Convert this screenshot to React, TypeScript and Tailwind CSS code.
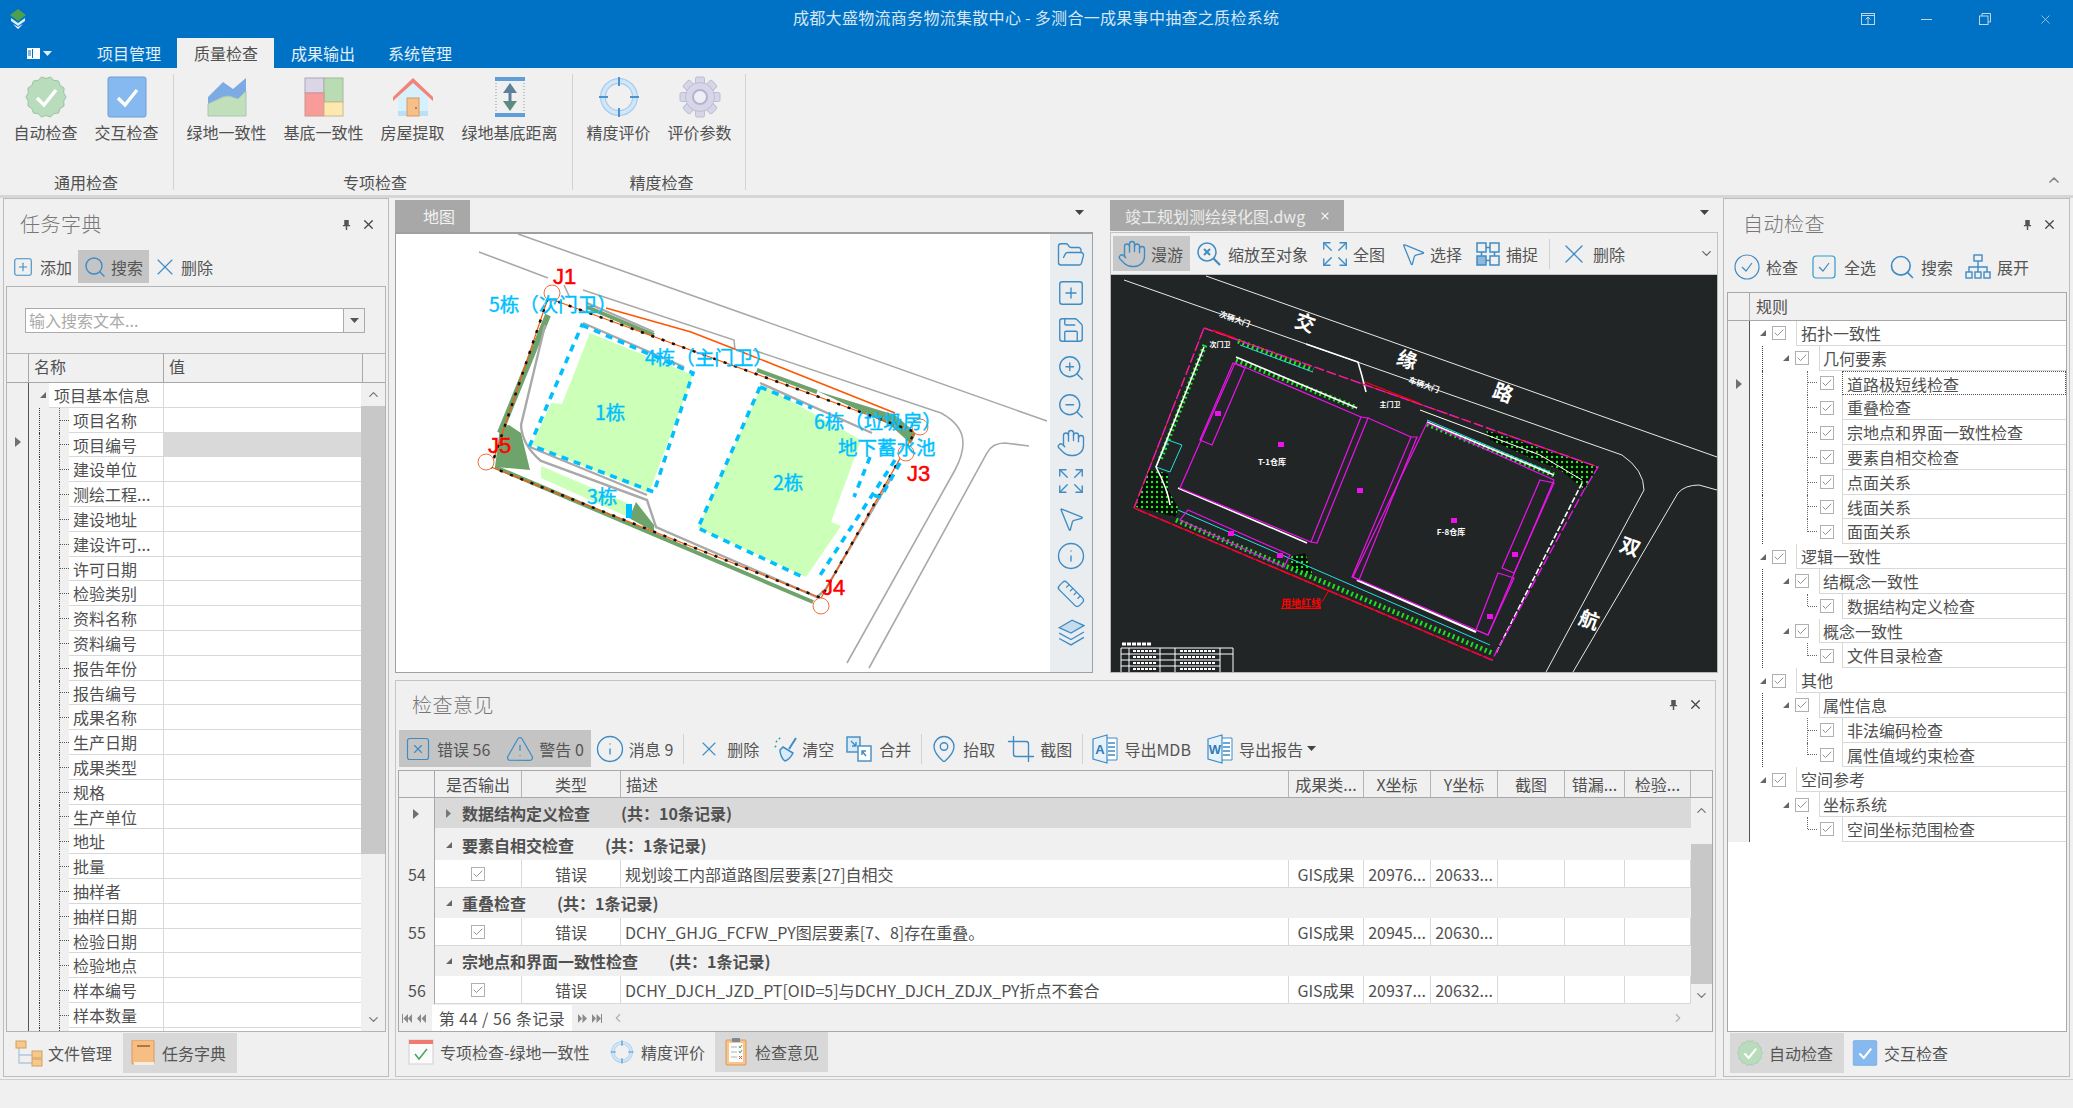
import React from "react";
import {
  Check,
  ChevronDown,
  ChevronLeft,
  ChevronRight,
  ChevronUp,
  Crop,
  Expand,
  FolderOpen,
  Hand,
  Info,
  MapPin,
  MousePointer2,
  Ruler,
  Save,
  Search,
  SquarePlus,
  SquareX,
  TriangleAlert,
  X,
  ZoomIn,
  ZoomOut,
} from "lucide-react";

const blue = "#3f8cc4";

const TreeCheck = () => (
  <span className="flex w-[14px] h-[14px] shrink-0 items-center justify-center border border-[#b0b0b0] bg-white">
    <Check size={12} color="#777777" strokeWidth={1.6} />
  </span>
);

const Triangle = ({ className = "" }: { className?: string }) => (
  <svg width="8" height="8" viewBox="0 0 8 8" className={className}>
    <path d="M7 1 V7 H1 Z" fill="#666666" />
  </svg>
);

const RowArrow = () => (
  <svg width="6" height="10" viewBox="0 0 6 10">
    <path d="M0 0 L6 5 L0 10 Z" fill="#707070" />
  </svg>
);

const DownCaret = ({ color = "#444444" }: { color?: string }) => (
  <svg width="9" height="5" viewBox="0 0 9 5">
    <path d="M0 0 H9 L4.5 5 Z" fill={color} />
  </svg>
);

const PinIcon = () => (
  <svg width="9" height="11" viewBox="0 0 10 12">
    <path d="M2.5 1 H7.5 V6.5 H9 V8 H5.8 V12 H4.2 V8 H1 V6.5 H2.5 Z" fill="#555555" />
  </svg>
);

const NavArrows = ({ dir }: { dir: "first" | "last" }) => (
  <svg width="28" height="9" viewBox="0 0 28 9" fill="#8a8a8a">
    {dir === "first" ? (
      <path d="M0 0 H1 V9 H0 Z M6 0 V9 L1.5 4.5 Z M10 0 V9 L6 4.5 Z M19 0 V9 L15 4.5 Z M24 0 V9 L19.5 4.5 Z" />
    ) : (
      <path d="M4 0 V9 L8 4.5 Z M8.5 0 V9 L13 4.5 Z M18 0 V9 L22 4.5 Z M22.5 0 V9 L27 4.5 Z M27 0 H28 V9 H27 Z" />
    )}
  </svg>
);

const BadgeIcon = ({ size = 42 }: { size?: number }) => {
  const pts = Array.from({ length: 28 }, (_, i) => {
    const r = i % 2 === 0 ? 20.5 : 18.5;
    const a = (i / 28) * Math.PI * 2;
    return `${21 + Math.cos(a) * r * 0.98},${21 + Math.sin(a) * r}`;
  }).join(" ");
  return (
    <svg width={size} height={size} viewBox="0 0 42 42">
      <polygon points={pts} fill="#b9dcbc" stroke="#98c4a4" />
      <path d="M12 22 L19 29 L31 14" fill="none" stroke="#ffffff" strokeWidth="3.4" />
    </svg>
  );
};

const BlueCheckIcon = ({ size = 42 }: { size?: number }) => (
  <svg width={size} height={size} viewBox="0 0 42 42">
    <rect x="2" y="1" width="38" height="40" rx="2" fill="#86b9ef" stroke="#6f9fd6" />
    <path d="M12 22 L19 29 L31 14" fill="none" stroke="#ffffff" strokeWidth="3.4" />
  </svg>
);

const GreenAreaIcon = () => (
  <svg width="42" height="42" viewBox="0 0 42 42">
    <path d="M2 21 L17 6 L27 13 L40 2 V16 L32 23 L23 20 L17 21 L2 28 Z" fill="#7cabe4" />
    <path d="M2 28 L17 21 L23 20 L32 23 L40 15 V40 H2 Z" fill="#c0dfbb" stroke="#adc4b4" />
  </svg>
);

const BlocksIcon = () => (
  <svg width="42" height="42" viewBox="0 0 42 42">
    <rect x="2" y="2" width="19" height="15" fill="#dcd5e8" stroke="#a8a8b4" />
    <rect x="21" y="2" width="19" height="24" fill="#b9dcb2" stroke="#a0b8a0" />
    <rect x="2" y="17" width="19" height="23" fill="#f99b98" stroke="#c89890" />
    <rect x="21" y="26" width="19" height="14" fill="#fde9ae" stroke="#c8b890" />
  </svg>
);

const HouseIcon = () => (
  <svg width="42" height="42" viewBox="0 0 42 42">
    <path d="M6 19 L21 6 L36 19 V40 H6 Z" fill="#d6f1fc" />
    <rect x="6" y="35" width="30" height="5" fill="#b8e2f4" />
    <path d="M1 21 L21 2 L41 21 V25 L21 7 L1 25 Z" fill="#f2837a" />
    <rect x="15" y="22" width="12" height="18" fill="#f7c088" stroke="#d49a66" />
    <circle cx="24" cy="32" r="0.9" fill="#996633" />
  </svg>
);

const DistanceIcon = () => (
  <svg width="42" height="42" viewBox="0 0 42 42">
    <rect x="7" y="2" width="28" height="38" fill="none" stroke="#8a9aa8" strokeDasharray="1 2" />
    <rect x="6" y="1" width="30" height="4" fill="#5f9ed8" />
    <rect x="6" y="37" width="30" height="4" fill="#5f9ed8" />
    <path d="M21 7 L28 17 H14 Z" fill="#5e7f98" />
    <path d="M21 35 L28 25 H14 Z" fill="#5c8c80" />
    <rect x="19.5" y="16" width="3" height="10" fill="#5e7f98" />
  </svg>
);

const RingIcon = ({ size = 42 }: { size?: number }) => (
  <svg width={size} height={size} viewBox="0 0 42 42">
    <circle cx="21" cy="21" r="16" fill="none" stroke="#a5cdee" strokeWidth="6" />
    <circle cx="21" cy="21" r="16" fill="none" stroke="#d2e6f8" strokeWidth="3.6" />
    <path d="M21 1 V10 M21 32 V41 M1 21 H10 M32 21 H41" stroke="#4d93d4" strokeWidth="2" />
  </svg>
);

const GearIcon = () => (
  <svg width="42" height="42" viewBox="0 0 42 42">
    {[0, 45, 90, 135, 180, 225, 270, 315].map((r) => (
      <rect key={r} x="16.5" y="1" width="9" height="9" rx="1.5" fill="#d6d6e8" stroke="#bcbcd2" transform={`rotate(${r} 21 21)`} />
    ))}
    <circle cx="21" cy="21" r="14.5" fill="#d6d6e8" stroke="#bcbcd2" />
    <circle cx="21" cy="21" r="7" fill="#eeeef6" stroke="#b4b4cc" strokeWidth="2" />
  </svg>
);

const ZoomObjectIcon = () => (
  <svg width="26" height="26" viewBox="0 0 26 26" fill="none" stroke={blue} strokeWidth="1.5">
    <circle cx="11" cy="11" r="9" />
    <path d="M17.5 17.5 L24 24" strokeWidth="2.2" />
    <path d="M8 8 L14 14 M14 8 L8 14" strokeWidth="2" />
  </svg>
);

const SnapIcon = () => (
  <svg width="26" height="26" viewBox="0 0 26 26" fill="none" stroke={blue} strokeWidth="1.5">
    <rect x="2" y="2" width="9" height="9" />
    <rect x="15" y="2" width="9" height="9" />
    <rect x="2" y="15" width="9" height="9" fill="#8fb8dc" />
    <rect x="15" y="15" width="9" height="9" />
    <path d="M11 6.5 H15 M6.5 11 V15 M15 19.5 H11 M19.5 11 V15" />
  </svg>
);

const TreeIcon = () => (
  <svg width="26" height="26" viewBox="0 0 26 26" fill="none" stroke={blue} strokeWidth="1.4">
    <rect x="9" y="1" width="8" height="6" />
    <rect x="1" y="18" width="6" height="6" />
    <rect x="10" y="18" width="6" height="6" />
    <rect x="19" y="18" width="6" height="6" />
    <path d="M13 7 V18 M4 18 V13 H22 V18" />
  </svg>
);

const BroomIcon = () => (
  <svg width="26" height="26" viewBox="0 0 26 26" fill="none" stroke={blue} strokeWidth="1.5">
    <path d="M22 2 L15 13" strokeWidth="2" />
    <path d="M9 11 L19 17 C17 21 14 24 11 25 C8 23 6 18 6 14 Z" fill="#d7ecf6" />
    <path d="M2 5 L3 6 M5 2 L6 3 M1 10 L2 11" stroke="#26a69a" strokeWidth="2" />
  </svg>
);

const MergeIcon = () => (
  <svg width="26" height="26" viewBox="0 0 26 26" fill="none" stroke={blue} strokeWidth="1.4">
    <rect x="1" y="1" width="13" height="15" fill="#d9e9f5" />
    <rect x="12" y="10" width="13" height="15" fill="#ffffff" />
    <path d="M5 5 L10 10 M10 6 V10 H6 M20 20 L16 15 M16 19 V15 H20" />
  </svg>
);

const BookTabIcon = () => (
  <svg width="24" height="26" viewBox="0 0 24 26">
    <rect x="1" y="0" width="22" height="24" rx="1" fill="#f6bd84" stroke="#d99a5c" />
    <rect x="3" y="22" width="20" height="3" fill="#f4ede4" />
    <rect x="6" y="5" width="13" height="2" fill="#b5763a" />
  </svg>
);

const FoldersIcon = () => (
  <svg width="28" height="28" viewBox="0 0 28 28">
    <path d="M4 8 V24 H18 M4 16 H18" fill="none" stroke="#b0c8dc" strokeWidth="1.4" />
    <rect x="1" y="2" width="10" height="7" fill="#f6c88c" stroke="#d0a060" />
    <rect x="17" y="12" width="10" height="7" fill="#f6c88c" stroke="#d0a060" />
    <rect x="17" y="20" width="10" height="7" fill="#f6c88c" stroke="#d0a060" />
  </svg>
);

const CalendarIcon = () => (
  <svg width="26" height="26" viewBox="0 0 26 26">
    <rect x="1" y="1" width="24" height="24" fill="#fbfbfb" stroke="#d0d0d0" />
    <rect x="1" y="1" width="24" height="4" fill="#ee7a72" />
    <path d="M7 15 L11 20 L19 10" fill="none" stroke="#4aa564" strokeWidth="1.6" />
  </svg>
);

const ClipboardIcon = () => (
  <svg width="22" height="28" viewBox="0 0 22 28">
    <rect x="1" y="2" width="20" height="25" rx="1" fill="#f8c68c" stroke="#d99a5c" />
    <rect x="4" y="5" width="14" height="19" fill="#fdfdfd" />
    <rect x="7" y="0" width="8" height="4" fill="#7a8a9a" />
    <path d="M6 9 H12 M6 14 H12 M6 19 H12" stroke="#b0b0b0" />
    <path d="M14 8 L15 10 L17 7 M14 13 L15 15 L17 12" stroke="#4aa564" fill="none" />
    <path d="M14 18 L17 21 M17 18 L14 21" stroke="#d9534f" />
  </svg>
);

const DocLetterIcon = ({ letter }: { letter: string }) => (
  <svg width="28" height="30" viewBox="0 0 28 30">
    <path d="M14 4 H26 V26 H14" fill="#ffffff" stroke={blue} />
    <path d="M17 9 H24 M17 13 H24 M17 17 H24 M17 21 H24" stroke={blue} strokeWidth="1.5" />
    <path d="M2 5 L16 1 V29 L2 25 Z" fill="#e6f1f9" stroke={blue} strokeWidth="1.2" />
    <text x="9" y="20" fontSize="13" fontWeight="700" textAnchor="middle" fill="#2f7cba" fontFamily="Liberation Sans">
      {letter}
    </text>
  </svg>
);

const Tool = ({
  icon,
  label,
  className = "",
  textClass = "ml-[5px]",
}: {
  icon: React.ReactNode;
  label: string;
  className?: string;
  textClass?: string;
}) => (
  <div className={`flex h-full items-center ${className}`}>
    <span className="flex w-[26px] h-[26px] items-center justify-center [&>svg]:shrink-0">{icon}</span>
    <span className={`whitespace-nowrap text-[16px] leading-[20px] text-[#555555] ${textClass}`}>{label}</span>
  </div>
);

const Sep = ({ className = "" }: { className?: string }) => (
  <div className={`w-px h-[30px] bg-[#d2d2d2] shrink-0 ${className}`} />
);

const PanelTitle = ({
  title,
  pad,
  closeClass,
  height = "h-[50px]",
}: {
  title: string;
  pad: string;
  closeClass: string;
  height?: string;
}) => (
  <div className={`flex shrink-0 items-center pb-[2px] ${height} ${pad}`}>
    <span className="text-[20px] text-[#777777] font-light tracking-[0.5px]">{title}</span>
    <span className={`ml-auto flex items-center ${closeClass}`}>
      <PinIcon />
      <X size={15} color="#444444" strokeWidth={2} className="ml-[10px]" />
    </span>
  </div>
);

const BottomTab = ({
  icon,
  label,
  active,
  className = "",
}: {
  icon: React.ReactNode;
  label: string;
  active?: boolean;
  className?: string;
}) => (
  <div className={`flex h-[40px] items-center ${active ? "bg-[#d8d8d8]" : ""} ${className}`}>
    <span className="flex w-[28px] h-[28px] items-center justify-center">{icon}</span>
    <span className="ml-[5px] whitespace-nowrap text-[16px] text-[#555555]">{label}</span>
  </div>
);

const RibbonItem = ({ icon, label, className }: { icon: React.ReactNode; label: string; className: string }) => (
  <div className={`flex flex-col items-center ${className}`}>
    <div className="flex h-[42px] items-center justify-center">{icon}</div>
    <span className="mt-[3px] whitespace-nowrap text-[16px] leading-[22px] text-[#505050]">{label}</span>
  </div>
);

const RibbonGroup = ({ label, className, children }: { label: string; className: string; children: React.ReactNode }) => (
  <div className={`flex h-full flex-col pt-[8px] ${className}`}>
    <div className="flex">{children}</div>
    <div className="mt-auto mb-[2px] text-center text-[16px] leading-[22px] text-[#505050]">{label}</div>
  </div>
);

const TitleBar = () => (
  <div className="flex h-[38px] items-center bg-[#0072c6]">
    <div className="w-[793px] pl-[10px]">
      <svg width="16" height="20" viewBox="0 0 16 20">
        <path d="M8 0 L16 6 L8 12 L0 6 Z" fill="#4fa04a" />
        <path d="M1 9 L8 14 L15 9 V12 L8 17 L1 12 Z" fill="#d7ecf6" />
        <path d="M3 15 L8 18 L13 15 L8 20 Z" fill="#ffffff" />
      </svg>
    </div>
    <span className="mb-[5px] whitespace-nowrap text-[16px] tracking-[0.3px] text-[#d8e6f3]">成都大盛物流商务物流集散中心 - 多测合一成果事中抽查之质检系统</span>
    <div className="ml-auto flex items-center pr-[20px]">
      <svg width="14" height="12" viewBox="0 0 14 12" fill="none" stroke="#c4d4e4" strokeWidth="1" className="mr-[46px]">
        <rect x="0.5" y="0.5" width="13" height="11" />
        <path d="M0.5 2.5 H13.5 M7 11 V4 M4.5 6.5 L7 4 L9.5 6.5" />
      </svg>
      <span className="mr-[47px] block w-[11px] h-px bg-[#c4d4e4]" />
      <svg width="12" height="12" viewBox="0 0 12 12" fill="none" stroke="#c4d4e4" className="mr-[47px]">
        <rect x="0.5" y="3" width="8.5" height="8.5" />
        <path d="M3 3 V0.5 H11.5 V9 H9" />
      </svg>
      <X size={15} color="#c4d4e4" strokeWidth={1.2} />
    </div>
  </div>
);

const RibbonTabs = () => (
  <div className="flex h-[30px] bg-[#0072c6] text-[16px] text-[#e4eef7]">
    <div className="flex w-[97px] items-center pl-[27px]">
      <svg width="13" height="11" viewBox="0 0 13 11" className="mr-[3px]">
        <rect x="0" y="0" width="13" height="11" fill="#ffffff" />
        <rect x="5" y="1" width="1" height="9" fill="#0072c6" />
        <path d="M1 3 H4 M1 5 H4 M1 7 H4" stroke="#0072c6" />
      </svg>
      <DownCaret color="#e4eef7" />
    </div>
    <div className="w-[80px] leading-[31px]">项目管理</div>
    <div className="w-[97px] bg-[#f0f0f0] pl-[17px] leading-[31px] text-[#505050]">质量检查</div>
    <div className="w-[98px] pl-[17px] leading-[31px]">成果输出</div>
    <div className="pl-[16px] leading-[31px]">系统管理</div>
  </div>
);

const Ribbon = () => (
  <div className="flex h-[127px] bg-[#f0f0f0]">
    <RibbonGroup label="通用检查" className="w-[173px] pl-[5px] pr-[6px]">
      <RibbonItem icon={<BadgeIcon />} label="自动检查" className="w-[81px]" />
      <RibbonItem icon={<BlueCheckIcon />} label="交互检查" className="w-[81px]" />
    </RibbonGroup>
    <div className="w-px h-[116px] mt-[6px] bg-[#d2d2d2]" />
    <RibbonGroup label="专项检查" className="w-[398px] pl-[4px]">
      <RibbonItem icon={<GreenAreaIcon />} label="绿地一致性" className="w-[97px]" />
      <RibbonItem icon={<BlocksIcon />} label="基底一致性" className="w-[97px]" />
      <RibbonItem icon={<HouseIcon />} label="房屋提取" className="w-[81px]" />
      <RibbonItem icon={<DistanceIcon />} label="绿地基底距离" className="w-[113px]" />
    </RibbonGroup>
    <div className="w-px h-[116px] mt-[6px] bg-[#d2d2d2]" />
    <RibbonGroup label="精度检查" className="w-[172px] pl-[5px]">
      <RibbonItem icon={<RingIcon />} label="精度评价" className="w-[81px]" />
      <RibbonItem icon={<GearIcon />} label="评价参数" className="w-[81px]" />
    </RibbonGroup>
    <div className="w-px h-[116px] mt-[6px] bg-[#d2d2d2]" />
    <div className="ml-auto mr-[11px] mt-[104px]">
      <ChevronUp size={16} color="#888888" strokeWidth={2.6} />
    </div>
  </div>
);

const taskRows = [
  "项目名称", "项目编号", "建设单位", "测绘工程...", "建设地址", "建设许可...", "许可日期", "检验类别", "资料名称", "资料编号",
  "报告年份", "报告编号", "成果名称", "生产日期", "成果类型", "规格", "生产单位", "地址", "批量", "抽样者",
  "抽样日期", "检验日期", "检验地点", "样本编号", "样本数量", "",
];

const LeftPanel = () => (
  <div className="flex ml-[3px] w-[386px] h-[879px] flex-col border border-[#bdbdbd] pt-px">
    <PanelTitle title="任务字典" pad="pl-[16px]" closeClass="mr-[12px]" />
    <div className="flex h-[33px] shrink-0">
      <Tool icon={<SquarePlus size={22} color={blue} strokeWidth={1.2} />} label="添加" className="ml-[6px]" textClass="ml-[4px]" />
      <Tool icon={<Search size={24} color={blue} strokeWidth={1.4} />} label="搜索" className="ml-[6px] pl-[4px] pr-[6px] bg-[#c4c4c4]" textClass="ml-[3px]" />
      <Tool icon={<X size={28} color={blue} strokeWidth={1} />} label="删除" className="ml-[3px]" textClass="ml-[3px]" />
    </div>
    <div className="mt-[3px] ml-[2px] flex h-[746px] w-[380px] flex-col border border-[#b4b4b4]">
      <div className="flex h-[67px] shrink-0 items-center border-b border-[#b4b4b4] pl-[18px]">
        <div className="flex w-[340px] h-[25px] border border-[#ababab] bg-white">
          <span className="flex-1 pl-[3px] text-[16px] leading-[23px] text-[#aaaaaa]">输入搜索文本...</span>
          <span className="flex w-[21px] items-center justify-center border-l border-[#ababab] bg-[#f0f0f0]">
            <DownCaret color="#555555" />
          </span>
        </div>
      </div>
      <div className="flex h-[29px] shrink-0 border-b border-[#a8a8a8] text-[16px] text-[#505050]">
        <div className="w-[22px] border-r border-[#a8a8a8]" />
        <div className="w-[135px] border-r border-[#a8a8a8] pl-[5px] leading-[25px]">名称</div>
        <div className="w-[199px] border-r border-[#a8a8a8] pl-[5px] leading-[25px]">值</div>
      </div>
      <div className="flex min-h-0 flex-1 overflow-hidden">
        <div className="flex w-[22px] shrink-0 flex-col items-center border-r border-[#555555] pt-[54px]">
          <RowArrow />
        </div>
        <div className="w-[334px] overflow-hidden">
          <div className="flex h-[24.8px] text-[16px] text-[#505050]">
            <div className="flex w-[20px] items-center pl-[10px]">
              <Triangle />
            </div>
            <div className="w-[114px] whitespace-nowrap border-b border-[#d8d8d8] bg-white pl-[5px] leading-[24px]">项目基本信息</div>
            <div className="flex-1 border-b border-l border-[#d8d8d8] bg-white" />
          </div>
          {taskRows.map((name, i) => (
            <div key={i} className="flex h-[24.8px] text-[16px] text-[#505050]">
              <div className="flex w-[40px] h-full items-center">
                <span className="ml-[10px] h-full border-l border-dotted border-[#333333]" />
                <span className="ml-[19px] h-full border-l border-dotted border-[#555555]" />
                <span className="w-[9px] border-t border-dotted border-[#555555]" />
              </div>
              <div className="w-[94px] whitespace-nowrap border-b border-[#d8d8d8] bg-white pl-[4px] leading-[24px]">{name}</div>
              <div className={`flex-1 border-b border-l border-[#d8d8d8] ${i === 1 ? "bg-[#d9d9d9]" : "bg-white"}`} />
            </div>
          ))}
        </div>
        <div className="flex w-[24px] shrink-0 flex-col items-center bg-[#f0f0f0]">
          <div className="flex h-[23px] shrink-0 items-center">
            <ChevronUp size={15} color="#777777" strokeWidth={2} />
          </div>
          <div className="h-[448px] w-full shrink-0 bg-[#c8c8c8]" />
          <div className="mt-auto mb-[4px]">
            <ChevronDown size={15} color="#777777" strokeWidth={2} />
          </div>
        </div>
      </div>
    </div>
    <div className="flex pt-px">
      <BottomTab icon={<FoldersIcon />} label="文件管理" className="ml-[11px] w-[108px]" />
      <BottomTab icon={<BookTabIcon />} label="任务字典" active className="pl-[6px] w-[114px]" />
    </div>
  </div>
);

const sideIcons = [
  <FolderOpen key="a" />, <SquarePlus key="b" />, <Save key="c" />, <ZoomIn key="d" />, <ZoomOut key="e" />, <Hand key="f" />,
  <Expand key="g" />, <MousePointer2 key="h" />, <Info key="i" />, <Ruler key="j" />,
];

const MapDrawing = () => {
  const curb = "#a9a9a9";
  const sky = "#00bfff";
  const labels: [string, number, number][] = [
    ["5栋（次门卫）", 489, 312],
    ["4栋（主门卫）", 645, 365],
    ["1栋", 595, 420],
    ["2栋", 773, 490],
    ["3栋", 587, 504],
    ["6栋（垃圾房）", 814, 429],
    ["地下蓄水池", 838, 455],
  ];
  const marks: [string, number, number][] = [
    ["J1", 553, 284],
    ["J5", 488, 453],
    ["J3", 907, 481],
    ["J4", 822, 595],
  ];
  return (
    <svg width="654" height="438" viewBox="396 234 654 438" className="block bg-white">
      <path d="M518 234 L1047 421" stroke={curb} strokeWidth="1.6" fill="none" />
      <path d="M479 252 L548 278 M564 285 L570 298 M583 290 L734 340 L735 350 M753 350 L941 413 Q963 425 963 443 Q963 455 955 470 L847 663" stroke={curb} strokeWidth="1.6" fill="none" />
      <path d="M869 668 L987 453 Q992 443 1005 443 L1029 446" stroke={curb} strokeWidth="1.6" fill="none" />
      <polygon points="590,333 693,375 649,493 532,445 551,403 562,404" fill="#ccffb8" />
      <polygon points="762,385 861,440 831,522 841,526 806,577 698,528" fill="#ccffb8" />
      <polygon points="541,466 632,505 628,517 541,478" fill="#ccffb8" />
      <path d="M548 315 L500 433" stroke="#6fa36c" strokeWidth="6" fill="none" />
      <polygon points="500,427 509,425 521,433 530,470 495,467" fill="#6fa36c" />
      <path d="M495 467 L813 602" stroke="#6fa36c" strokeWidth="4" fill="none" />
      <polygon points="636,502 654,525 654,532 629,518" fill="#6fa36c" />
      <path d="M587 307 L654 335 M757 370 L817 392" stroke="#6fa36c" strokeWidth="4" fill="none" />
      <polygon points="817,391 895,415 916,433 911,444 890,425" fill="#6fa36c" />
      <path d="M545 325 L521 425 Q522 445 541 461 L647 500 L656 527 L817 597 L825 590 L890 480" stroke={curb} strokeWidth="2.4" fill="none" />
      <path d="M583 323 L684 367 M760 383 L872 433 M530 447 L647 495 M587 303 L654 332" stroke={curb} strokeWidth="2.4" fill="none" />
      <polyline points="606,308 691,332 732,348 895,413" stroke="#ff5500" strokeWidth="1.6" fill="none" />
      <polygon points="548,298 915,432 821,598 491,467" fill="none" stroke="#ff5500" strokeWidth="1.2" />
      <polygon points="548,298 915,432 821,598 491,467" fill="none" stroke="#111111" strokeWidth="2.5" strokeDasharray="3 8" />
      <path d="M582 325 L693 373 L654 492 L530 445 Z" fill="none" stroke={sky} strokeWidth="3.6" strokeDasharray="7 6" />
      <path d="M760 387 L812 408 M760 387 L698 528 L803 577 M895 460 L817 580 M870 457 L854 497 M900 463 L881 497 L872 495" fill="none" stroke={sky} strokeWidth="3.6" strokeDasharray="7 6" />
      <rect x="626" y="504" width="6" height="14" fill={sky} />
      {[[552, 293], [486, 462], [821, 606], [906, 453], [920, 427]].map(([x, y]) => (
        <circle key={x} cx={x} cy={y} r="8" fill="#ffffff" stroke="#f07040" strokeWidth="1" />
      ))}
      {labels.map(([t, x, y]) => (
        <text key={t} x={x} y={y} fontSize="19.5" fontFamily="Noto Sans CJK SC" fill={sky} stroke={sky} strokeWidth="0.4">
          {t}
        </text>
      ))}
      {marks.map(([t, x, y]) => (
        <text key={t} x={x} y={y} fontSize="22" fontFamily="Liberation Sans" fill="#ff0000" stroke="#ff0000" strokeWidth="0.5">
          {t}
        </text>
      ))}
    </svg>
  );
};

const MapPanel = () => (
  <div className="flex w-[698px] flex-col">
    <div className="flex h-[34px] items-start border-b-2 border-[#a0a0a0]">
      <div className="flex w-[75px] h-[32px] items-center bg-[#a8a8a8] pl-[28px] text-[16px] text-[#f2f2f2]">地图</div>
      <span className="ml-auto mr-[9px] mt-[10px]">
        <DownCaret />
      </span>
    </div>
    <div className="flex h-[439px] border-b border-l border-r border-[#a0a0a0]">
      <MapDrawing />
      <div className="flex w-[42px] flex-col items-center bg-[#e9edf0] pt-[2px] [&>div]:flex [&>div]:h-[37.7px] [&>div]:items-center">
        {sideIcons.map((ic) => (
          <div key={ic.key}>{React.cloneElement(ic as React.ReactElement<any>, { size: 30, color: blue, strokeWidth: 1.1 })}</div>
        ))}
        <div>
          <svg width="28" height="28" viewBox="0 0 26 26" fill="none" stroke={blue} strokeWidth="1.2">
            <path d="M2 9 L14 2 L25 7 L13 14 Z" fill="#c4dcec" />
            <path d="M2 14 L13 20 L25 13" />
            <path d="M2 19 L13 25 L25 18" />
          </svg>
        </div>
      </div>
    </div>
  </div>
);

const CadDrawing = () => (
  <svg width="606" height="397" viewBox="1111 275 606 397" className="block bg-[#212525]">
    <defs>
      <pattern id="dots" width="5" height="5" patternUnits="userSpaceOnUse">
        <rect width="5" height="5" fill="#050c05" />
        <circle cx="2" cy="2" r="1.2" fill="#22ee22" />
      </pattern>
    </defs>
    <g fill="none" stroke="#e8e8e8" strokeWidth="1">
      <path d="M1206 276 L1717 457" />
      <path d="M1124 280 L1622 455 Q1644 470 1644 490 L1546 672" />
      <path d="M1573 672 L1678 493 Q1685 485 1699 485 L1717 490" />
    </g>
    <g fill="url(#dots)" stroke="none">
      <polygon points="1136,507 1148,470 1168,473 1168,490 1178,507 1176,517" />
      <polygon points="1289,557 1305,553 1313,575 1293,570" />
      <polygon points="1486,430 1560,455 1598,467 1585,490 1560,470 1540,462 1490,440" />
    </g>
    <g fill="none" stroke="#22dd22" strokeWidth="5" strokeDasharray="2 3">
      <path d="M1176 520 L1492 653" />
      <path d="M1238 341 L1313 370" />
      <path d="M1236 360 L1357 408" />
      <path d="M1427 424 L1554 475" />
      <path d="M1205 345 L1160 460" />
    </g>
    <g fill="none" stroke="#25e0e0" strokeWidth="1">
      <path d="M1168 440 L1182 445 L1170 472 L1156 467 Z" />
      <path d="M1178 510 L1490 645" />
      <path d="M1240 345 L1313 372 M1427 420 L1550 472" />
    </g>
    <g fill="none" stroke="#ffffff" strokeWidth="1.6">
      <path d="M1204 347 L1156 467 Q1168 490 1170 505" />
      <path d="M1178 488 L1307 543" />
      <path d="M1236 357 L1357 408" />
      <path d="M1427 422 L1554 475" />
      <path d="M1357 580 L1476 632" strokeWidth="2.4" />
      <path d="M1582 483 L1496 653" strokeDasharray="6 2" />
      <path d="M1306 344 L1358 362 L1362 376 L1366 392" />
      <path d="M1420 410 L1540 455 L1582 480" strokeWidth="1" />
    </g>
    <g fill="none" stroke="#ee11ee" strokeWidth="1.2">
      <path d="M1235 363 L1361 417 L1311 542 L1180 488 Z" />
      <path d="M1233 363 L1245 368 L1212 445 L1200 440 Z" />
      <path d="M1361 417 L1368 418 L1317 543 L1311 542" />
      <path d="M1368 418 L1411 437" />
      <path d="M1427 423 L1554 480 L1488 635 L1353 577 Z" />
      <path d="M1411 437 L1417 437 L1359 580 L1352 577 Z" />
      <path d="M1540 480 L1554 483 L1514 573 L1502 568 Z" />
      <path d="M1498 573 L1514 578 L1488 635 L1476 630 Z" />
      <path d="M1188 510 L1290 555 L1284 567 L1180 520 Z" />
      <path d="M1204 328 L1598 467 L1584 490 L1492 660 L1134 508 Z" strokeWidth="1.4" strokeDasharray="10 3" />
    </g>
    <path d="M1134 508 L1204 328 L1598 467" fill="none" stroke="#ff2040" strokeWidth="1" strokeDasharray="8 4" />
    <path d="M1213 330 L1235 338 M1365 382 L1419 403 M1134 508 L1492 660" fill="none" stroke="#ff0000" strokeWidth="1.2" />
    <g fill="#ee11ee">
      {[[1218, 413], [1281, 444], [1360, 490], [1454, 520], [1515, 554], [1490, 616], [1280, 555], [1231, 533]].map(([x, y]) => (
        <rect key={x} x={x - 3} y={y - 2} width="6" height="5" />
      ))}
    </g>
    <g fill="#ffffff" fontFamily="Noto Sans CJK SC" textAnchor="middle">
      <text x="1305" y="330" fontSize="20" fontWeight="700" transform="rotate(20 1305 323)">交</text>
      <text x="1407" y="367" fontSize="20" fontWeight="700" transform="rotate(20 1407 360)">缘</text>
      <text x="1503" y="400" fontSize="20" fontWeight="700" transform="rotate(20 1503 393)">路</text>
      <text x="1630" y="554" fontSize="20" fontWeight="700" transform="rotate(20 1630 547)">双</text>
      <text x="1589" y="627" fontSize="20" fontWeight="700" transform="rotate(20 1589 620)">航</text>
      <text x="1272" y="465" fontSize="8" fontWeight="700">T-1仓库</text>
      <text x="1451" y="535" fontSize="8" fontWeight="700">F-8仓库</text>
      <text x="1220" y="347" fontSize="7" fontWeight="700">次门卫</text>
      <text x="1390" y="407" fontSize="7" fontWeight="700">主门卫</text>
      <text x="1425" y="388" fontSize="8" fontWeight="700" transform="rotate(20 1425 382)">车辆大门</text>
      <text x="1235" y="322" fontSize="8" fontWeight="700" transform="rotate(20 1235 318)">次辆大门</text>
    </g>
    <text x="1301" y="607" fontSize="10" fontWeight="700" textAnchor="middle" fontFamily="Noto Sans CJK SC" fill="#ff0000" textDecoration="underline">用地红线</text>
    <path d="M1322 602 L1329 590" stroke="#ff0000" fill="none" />
    <g stroke="#ffffff" fill="none">
      <path d="M1121 648 H1233 V672 M1121 648 V672 M1121 654 H1233 M1121 660 H1220 M1121 666 H1220" />
      <path d="M1129 648 V672 M1160 648 V672 M1175 648 V672 M1220 648 V672" />
      <path d="M1122 644 H1152" strokeWidth="3" strokeDasharray="4 1" />
      <path d="M1133 651 H1156 M1133 657 H1156 M1133 663 H1156 M1133 669 H1156 M1180 651 H1215 M1180 657 H1215 M1180 663 H1215 M1180 669 H1215" strokeWidth="2" strokeDasharray="3 1" />
    </g>
  </svg>
);

const DocPanel = () => (
  <div className="ml-[17px] flex w-[608px] flex-col">
    <div className="flex h-[32px] shrink-0 items-start">
      <div className="flex w-[234px] h-[31px] items-center bg-[#a8a8a8] pl-[15px] text-[16px] text-[#ececec]">
        <span className="whitespace-nowrap">竣工规划测绘绿化图.dwg</span>
        <X size={12} color="#f4f4f4" strokeWidth={2.2} className="ml-[14px]" />
      </div>
      <span className="ml-auto mr-[9px] mt-[10px]">
        <DownCaret />
      </span>
    </div>
    <div className="flex h-[43px] shrink-0 items-center border border-[#c2c2c2] bg-[#f0f0f0] py-[3px]">
      <Tool icon={<Hand size={30} color={blue} strokeWidth={1.1} />} label="漫游" className="ml-[2px] pl-[6px] pr-[7px] bg-[#c8c8c8]" textClass="ml-[6px]" />
      <Tool icon={<ZoomObjectIcon />} label="缩放至对象" className="ml-[6px]" textClass="ml-[6px]" />
      <Tool icon={<Expand size={30} color={blue} strokeWidth={1.1} />} label="全图" className="ml-[14px]" />
      <Tool icon={<MousePointer2 size={28} color={blue} strokeWidth={1.1} />} label="选择" className="ml-[15px]" textClass="ml-[4px]" />
      <Tool icon={<SnapIcon />} label="捕捉" className="ml-[13px]" />
      <Sep className="ml-[11px]" />
      <Tool icon={<X size={32} color={blue} strokeWidth={1} />} label="删除" className="ml-[11px]" textClass="ml-[6px]" />
      <span className="ml-auto mr-[3px]">
        <ChevronDown size={15} color="#666666" strokeWidth={2} />
      </span>
    </div>
    <div className="border-b border-l border-r border-[#b8b8b8]">
      <CadDrawing />
    </div>
  </div>
);

const colWidths = ["w-[87px]", "w-[99px]", "w-[668px]", "w-[75px]", "w-[67px]", "w-[67px]", "w-[67px]", "w-[60px]", "w-[66px]"];

const heads = ["是否输出", "类型", "描述", "成果类...", "X坐标", "Y坐标", "截图", "错漏...", "检验..."];

const GroupRow = ({
  title,
  count,
  first,
  className,
}: {
  title: string;
  count: string;
  first?: boolean;
  className: string;
}) => (
  <div className={`flex text-[16px] ${className}`}>
    <div className="flex w-[36px] shrink-0 items-center border-r border-[#a8a8a8] pl-[14px]">{first && <RowArrow />}</div>
    <div className={`flex flex-1 h-[30px] items-center font-bold text-[#505050] ${first ? "bg-[#d9d9d9]" : "bg-[#f0f0f0]"}`}>
      <span className="flex w-[27px] justify-center">
        {first ? (
          <svg width="5" height="9" viewBox="0 0 5 9">
            <path d="M0 0 L5 4.5 L0 9 Z" fill="#777777" />
          </svg>
        ) : (
          <Triangle />
        )}
      </span>
      <span>{title}</span>
      <span className="ml-[31px]">{count}</span>
    </div>
  </div>
);

const DataRow = ({ num, desc, x, y }: { num: number; desc: string; x: string; y: string }) => {
  const cells = ["", "错误", desc, "GIS成果", x, y, "", "", ""];
  return (
    <div className="flex h-[28px] text-[16px] text-[#505050]">
      <div className="flex w-[36px] shrink-0 items-center border-r border-[#a8a8a8] pl-[9px]">{num}</div>
      {cells.map((c, i) => (
        <div
          key={i}
          className={`flex shrink-0 items-center overflow-hidden whitespace-nowrap border-r border-b border-[#d8d8d8] bg-white ${colWidths[i]} ${
            i === 2 ? "pl-[4px]" : "justify-center"
          }`}
        >
          {i === 0 ? <TreeCheck /> : c}
        </div>
      ))}
    </div>
  );
};

const ReviewPanel = () => (
  <div className="mt-[7px] flex h-[397px] w-[1321px] flex-col border border-[#c4c4c4]">
    <PanelTitle title="检查意见" pad="pl-[16px]" closeClass="mr-[12px]" height="h-[49px]" />
    <div className="flex h-[37px] shrink-0 items-center">
      <div className="ml-[3px] flex h-full items-center bg-[#c4c4c4]">
        <Tool icon={<SquareX size={28} color={blue} strokeWidth={1} />} label="错误 56" className="pl-[6px]" textClass="ml-[6px]" />
        <Tool icon={<TriangleAlert size={30} color={blue} strokeWidth={1} />} label="警告 0" className="ml-[17px] pr-[7px]" textClass="ml-[6px]" />
      </div>
      <Tool icon={<Info size={30} color={blue} strokeWidth={1.1} />} label="消息 9" className="ml-[6px]" textClass="ml-[6px]" />
      <Sep className="ml-[10px]" />
      <Tool icon={<X size={24} color={blue} strokeWidth={1.1} />} label="删除" className="ml-[12px]" textClass="ml-[5px]" />
      <Tool icon={<BroomIcon />} label="清空" className="ml-[15px]" textClass="ml-[2px]" />
      <Tool icon={<MergeIcon />} label="合并" className="ml-[12px]" textClass="ml-[7px]" />
      <Sep className="ml-[10px]" />
      <Tool icon={<MapPin size={30} color={blue} strokeWidth={1.1} />} label="抬取" className="ml-[9px]" textClass="ml-[6px]" />
      <Tool icon={<Crop size={30} color={blue} strokeWidth={1.1} />} label="截图" className="ml-[13px]" textClass="ml-[6px]" />
      <Sep className="ml-[10px]" />
      <Tool icon={<DocLetterIcon letter="A" />} label="导出MDB" className="ml-[9px]" textClass="ml-[6px]" />
      <Tool icon={<DocLetterIcon letter="W" />} label="导出报告" className="ml-[16px]" textClass="ml-[6px]" />
      <span className="ml-[4px]">
        <DownCaret />
      </span>
    </div>
    <div className="ml-[2px] mt-[3px] flex h-[262px] w-[1315px] shrink-0 flex-col border border-[#a8a8a8]">
      <div className="flex h-[27px] shrink-0 border-b border-[#a8a8a8] text-[16px] text-[#505050]">
        <div className="w-[36px] shrink-0 border-r border-[#a8a8a8]" />
        {heads.map((h, i) => (
          <div key={h} className={`flex shrink-0 items-center whitespace-nowrap border-r border-[#b4b4b4] ${colWidths[i]} ${i === 2 ? "pl-[5px]" : "justify-center"}`}>
            {h}
          </div>
        ))}
      </div>
      <div className="flex h-[207px] shrink-0">
        <div className="w-[1292px] shrink-0 overflow-hidden">
          <GroupRow title="数据结构定义检查" count="(共：10条记录)" first className="h-[32px]" />
          <GroupRow title="要素自相交检查" count="(共：1条记录)" className="h-[30px]" />
          <DataRow num={54} desc="规划竣工内部道路图层要素[27]自相交" x="20976..." y="20633..." />
          <GroupRow title="重叠检查" count="(共：1条记录)" className="h-[30px]" />
          <DataRow num={55} desc="DCHY_GHJG_FCFW_PY图层要素[7、8]存在重叠。" x="20945..." y="20630..." />
          <GroupRow title="宗地点和界面一致性检查" count="(共：1条记录)" className="h-[30px]" />
          <DataRow num={56} desc="DCHY_DJCH_JZD_PT[OID=5]与DCHY_DJCH_ZDJX_PY折点不套合" x="20937..." y="20632..." />
        </div>
        <div className="flex flex-1 flex-col items-center bg-[#f0f0f0]">
          <div className="flex h-[46px] shrink-0 items-center pb-[22px]">
            <ChevronUp size={15} color="#777777" strokeWidth={2} />
          </div>
          <div className="h-[140px] w-full shrink-0 bg-[#c8c8c8]" />
          <div className="mt-auto mb-[2px]">
            <ChevronDown size={15} color="#777777" strokeWidth={2} />
          </div>
        </div>
      </div>
      <div className="flex flex-1 items-center bg-[#f0f0f0] text-[16px] text-[#505050]">
        <span className="ml-[3px] w-[30px]">
          <NavArrows dir="first" />
        </span>
        <span className="flex h-full w-[140px] items-center justify-center whitespace-nowrap bg-white tracking-[0.5px]">第 44 / 56 条记录</span>
        <span className="ml-[2px] w-[37px]">
          <NavArrows dir="last" />
        </span>
        <ChevronLeft size={14} color="#b0b0b0" strokeWidth={2} />
        <ChevronRight size={14} color="#b0b0b0" strokeWidth={2} className="ml-auto mr-[27px]" />
      </div>
    </div>
    <div className="flex">
      <BottomTab icon={<CalendarIcon />} label="专项检查-绿地一致性" className="ml-[11px] w-[200px]" />
      <BottomTab icon={<RingIcon size={24} />} label="精度评价" className="ml-[1px] w-[107px]" />
      <BottomTab icon={<ClipboardIcon />} label="检查意见" active className="pl-[7px] w-[113px]" />
    </div>
  </div>
);

type Rule = { label: string; level: 0 | 1 | 2; outer?: boolean; inner?: boolean; last?: boolean; selected?: boolean };

const rules: Rule[] = [
  { label: "拓扑一致性", level: 0 },
  { label: "几何要素", level: 1, outer: true },
  { label: "道路极短线检查", level: 2, outer: true, inner: true, selected: true },
  { label: "重叠检查", level: 2, outer: true, inner: true },
  { label: "宗地点和界面一致性检查", level: 2, outer: true, inner: true },
  { label: "要素自相交检查", level: 2, outer: true, inner: true },
  { label: "点面关系", level: 2, outer: true, inner: true },
  { label: "线面关系", level: 2, outer: true, inner: true },
  { label: "面面关系", level: 2, outer: true, inner: true, last: true },
  { label: "逻辑一致性", level: 0 },
  { label: "结概念一致性", level: 1, outer: true },
  { label: "数据结构定义检查", level: 2, outer: true, inner: true, last: true },
  { label: "概念一致性", level: 1, outer: true },
  { label: "文件目录检查", level: 2, outer: true, inner: true, last: true },
  { label: "其他", level: 0 },
  { label: "属性信息", level: 1, outer: true },
  { label: "非法编码检查", level: 2, outer: true, inner: true },
  { label: "属性值域约束检查", level: 2, outer: true, inner: true, last: true },
  { label: "空间参考", level: 0 },
  { label: "坐标系统", level: 1 },
  { label: "空间坐标范围检查", level: 2, inner: true, last: true },
];

const RuleRow = ({ rule }: { rule: Rule }) => (
  <div className="flex h-[24.8px] text-[16px] text-[#505050]">
    <div className={`flex shrink-0 h-full items-center ${rule.level === 0 ? "w-[46px]" : rule.level === 1 ? "w-[69px]" : "w-[92px]"}`}>
      {rule.level === 0 ? (
        <Triangle className="ml-[9px]" />
      ) : (
        <span className={`ml-[12px] h-full border-l border-dotted ${rule.outer ? "border-[#444444]" : "border-transparent"}`} />
      )}
      {rule.level === 1 && <Triangle className="ml-[19px]" />}
      {rule.level === 2 && (
        <>
          <span className={`ml-[44px] w-0 border-l border-dotted border-[#666666] ${rule.last ? "h-1/2 self-start" : "h-full"}`} />
          <span className="w-[9px] border-t border-dotted border-[#666666]" />
        </>
      )}
      <span className={rule.level === 2 ? "ml-[3px]" : "ml-[5px]"}>
        <TreeCheck />
      </span>
    </div>
    <div
      className={`flex-1 whitespace-nowrap bg-white leading-[24px] ${rule.level === 0 ? "pl-[4px]" : rule.level === 2 ? "pl-[4px]" : "pl-[3px]"} ${
        rule.selected ? "border border-dotted border-[#555555]" : "border-b border-l border-[#d8d8d8]"
      }`}
    >
      {rule.label}
    </div>
  </div>
);

const RightPanel = () => (
  <div className="ml-[5px] flex w-[347px] h-[879px] flex-col border border-[#bdbdbd] pt-px">
    <PanelTitle title="自动检查" pad="pl-[19px]" closeClass="mr-[12px]" />
    <div className="flex h-[33px] shrink-0">
      <Tool icon={<svg width="26" height="26" viewBox="0 0 26 26" fill="none" stroke={blue} strokeWidth="1.2"><circle cx="13" cy="13" r="12" /><path d="M8 13 L12 17 L18 9" /></svg>} label="检查" className="ml-[10px]" textClass="ml-[6px]" />
      <Tool icon={<svg width="24" height="24" viewBox="0 0 24 24" fill="none" stroke="#2f9fc4" strokeWidth="1.2"><rect x="1" y="1" width="22" height="22" rx="3" /><path d="M7 12 L11 16 L17 8" stroke={blue} /></svg>} label="全选" className="ml-[13px]" textClass="ml-[7px]" />
      <Tool icon={<Search size={28} color={blue} strokeWidth={1.4} />} label="搜索" className="ml-[13px]" textClass="ml-[6px]" />
      <Tool icon={<TreeIcon />} label="展开" className="ml-[12px]" textClass="ml-[6px]" />
    </div>
    <div className="ml-[3px] mt-[9px] flex h-[740px] w-[340px] flex-col border border-[#a8a8a8] bg-white">
      <div className="flex h-[28px] shrink-0 border-b border-[#a8a8a8] bg-[#f0f0f0] text-[16px] text-[#505050]">
        <div className="w-[22px] border-r border-[#a8a8a8]" />
        <div className="pl-[6px] leading-[26px]">规则</div>
      </div>
      <div className="flex">
        <div className="flex w-[22px] shrink-0 flex-col items-center border-r border-[#555555] bg-[#f0f0f0] pt-[58px]">
          <RowArrow />
        </div>
        <div className="flex-1">
          {rules.map((r) => (
            <RuleRow key={r.label} rule={r} />
          ))}
        </div>
      </div>
    </div>
    <div className="flex pt-px">
      <BottomTab icon={<BadgeIcon size={26} />} label="自动检查" active className="ml-[6px] pl-[6px] w-[114px]" />
      <BottomTab icon={<BlueCheckIcon size={26} />} label="交互检查" className="ml-[7px]" />
    </div>
  </div>
);

const App = () => (
  <div className="flex w-[2073px] h-[1108px] flex-col overflow-hidden bg-[#f0f0f0] font-['Noto_Sans_CJK_SC','Noto_Sans',sans-serif]">
    <TitleBar />
    <RibbonTabs />
    <Ribbon />
    <div className="h-[3px] bg-[#d6d6d6]" />
    <div className="flex h-[879px]">
      <LeftPanel />
      <div className="ml-[6px] flex w-[1323px] flex-col">
        <div className="flex pt-[2px]">
          <MapPanel />
          <DocPanel />
        </div>
        <ReviewPanel />
      </div>
      <RightPanel />
    </div>
    <div className="h-px mt-[2px] bg-[#cfcfcf]" />
    <div className="flex-1 bg-[#f0f0f0]" />
  </div>
);

export default App;
